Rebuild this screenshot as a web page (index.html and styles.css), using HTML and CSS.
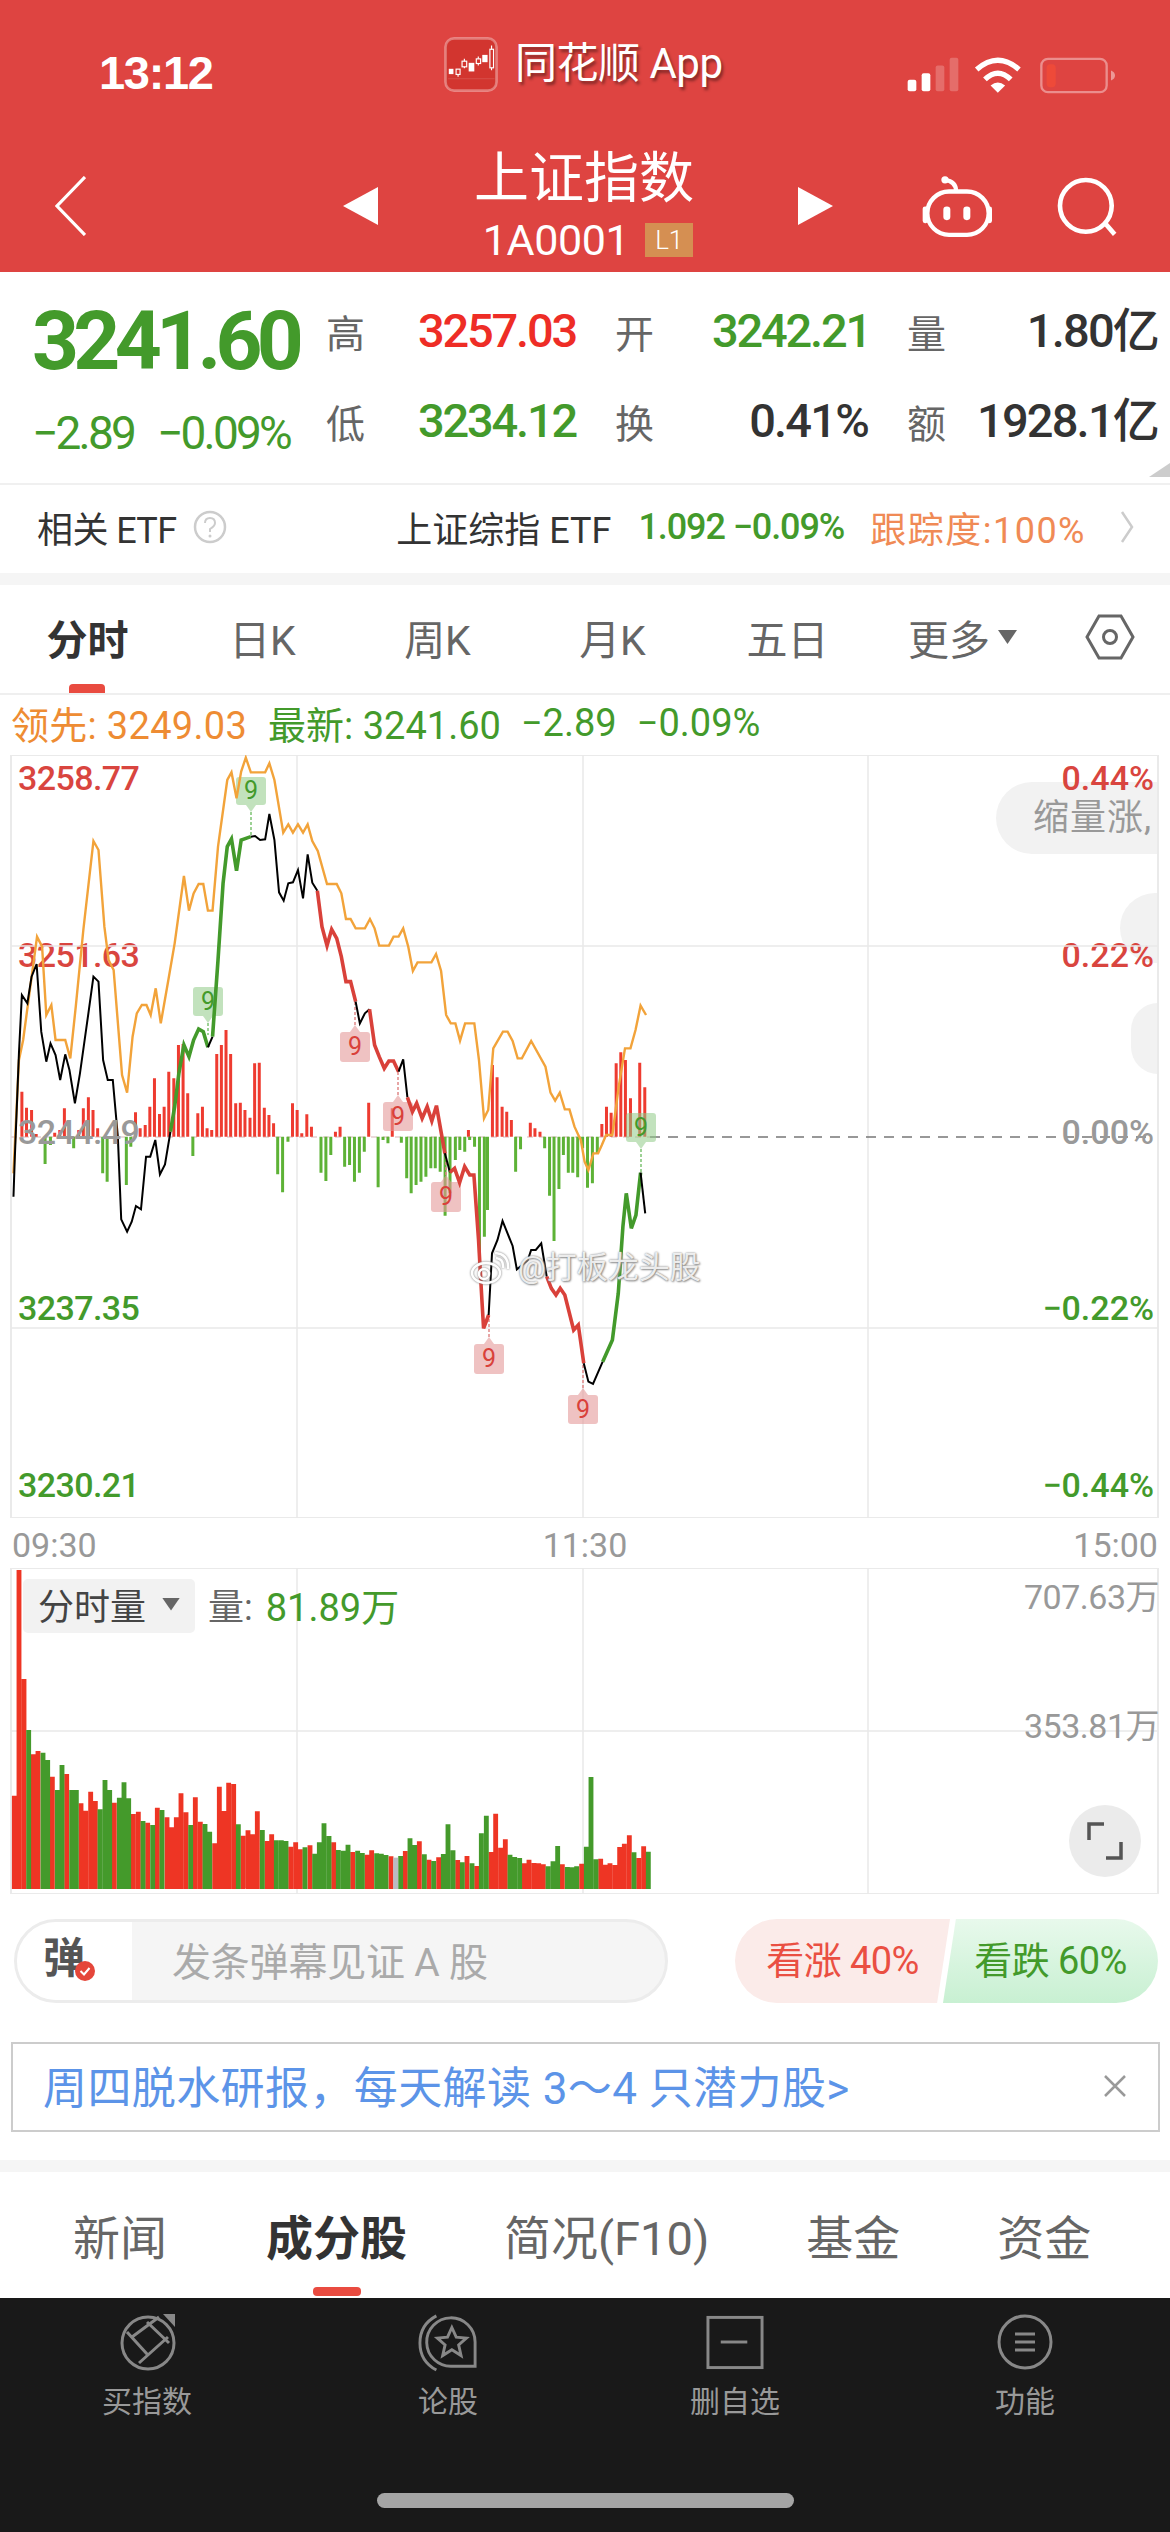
FILE: index.html
```html
<!DOCTYPE html>
<html lang="zh-CN">
<head>
<meta charset="utf-8">
<title>上证指数</title>
<link rel="stylesheet" href="styles.css">
</head>
<body>
<div class="page">
  <header class="header">
    <div class="status">
      <div class="time">13:12</div>
      <div class="app">
        <svg class="logo" viewBox="38 16 162 166">
          <rect x="42" y="20" width="154" height="158" rx="26" fill="#D2352F" stroke="#fff" stroke-opacity=".35" stroke-width="8"/>
          <path d="M50 142H190" stroke="#fff" stroke-opacity=".2" stroke-width="2"/>
          <g fill="#fff"><rect x="52" y="112" width="14" height="16"/><rect x="112" y="94" width="17" height="26"/><rect x="153" y="70" width="16" height="22"/></g>
          <g fill="none" stroke="#fff" stroke-width="3.5"><rect x="74" y="113" width="12" height="16"/><path d="M80 129V136"/><rect x="92" y="89" width="14" height="17"/><path d="M99 82V89M99 106V110"/><rect x="135" y="82" width="13" height="14"/><path d="M141 75V82M141 96V102"/><rect x="176" y="53" width="11" height="56"/><path d="M181 42V53M181 109V116"/></g>
        </svg>
        <span class="app-name">同花顺 App</span>
      </div>
      <div class="sys">
        <svg class="sig" viewBox="20 50 156 104"><g fill="#fff"><rect x="22" y="118" width="26" height="34" rx="6"/><rect x="64" y="98" width="26" height="54" rx="6"/><rect x="106" y="75" width="26" height="77" rx="6" opacity=".22"/><rect x="148" y="52" width="26" height="100" rx="6" opacity=".22"/></g></svg>
        <svg class="wifi" viewBox="220 40 155 118"><path d="M233 84Q297 28 361 84M258 114Q297 76 336 114" fill="none" stroke="#fff" stroke-width="16"/><path d="M275 132Q297 114 319 132L297 154Z" fill="#fff"/></svg>
        <svg class="batt" viewBox="420 47 228 110"><rect x="424" y="52" width="196" height="100" rx="20" fill="none" stroke="#fff" stroke-opacity=".4" stroke-width="7"/><rect x="440" y="68" width="27" height="69" rx="11" fill="#EE4A39"/><path d="M633 87Q645 92 645 102T633 117Z" fill="#fff" fill-opacity=".45"/></svg>
      </div>
    </div>
    <div class="nav">
      <svg class="back" viewBox="0 0 31 60"><path d="M30 1L2 30L30 59" fill="none" stroke="#fff" stroke-width="3.2"/></svg>
      <svg class="tri tri-l" viewBox="0 0 35 38"><path d="M35 0V38L0 19Z" fill="#fff"/></svg>
      <div class="title-block">
        <div class="title">上证指数</div>
        <div class="sub"><span class="code">1A0001</span><span class="level">L1</span></div>
      </div>
      <svg class="tri tri-r" viewBox="0 0 35 38"><path d="M0 0V38L35 19Z" fill="#fff"/></svg>
      <svg class="robot" viewBox="60 395 225 200"><g fill="none" stroke="#fff" stroke-width="13"><rect x="82" y="450" width="184" height="130" rx="65"/><path d="M135 415Q168 420 168 448"/></g><circle cx="135" cy="415" r="11" fill="#fff"/><g fill="#fff"><rect x="130" y="495" width="21" height="41" rx="10"/><rect x="190" y="495" width="21" height="41" rx="10"/><rect x="68" y="495" width="16" height="50" rx="7"/><rect x="262" y="495" width="14" height="50" rx="7"/></g></svg>
      <svg class="search" viewBox="460 400 190 190"><circle cx="553" cy="493" r="78" fill="none" stroke="#fff" stroke-width="14"/><path d="M613 548L640 579" stroke="#fff" stroke-width="14"/></svg>
    </div>
  </header>

  <section class="quote">
    <div class="now">
      <div class="price">3241.60</div>
      <div class="change"><span>−2.89</span><span>−0.09%</span></div>
    </div>
    <div class="stats">
      <div class="stat"><span class="k">高</span><span class="v up">3257.03</span></div>
      <div class="stat"><span class="k">开</span><span class="v down mid">3242.21</span></div>
      <div class="stat"><span class="k">量</span><span class="v">1.80亿</span></div>
      <div class="stat"><span class="k">低</span><span class="v down">3234.12</span></div>
      <div class="stat"><span class="k">换</span><span class="v">0.41%</span></div>
      <div class="stat"><span class="k">额</span><span class="v">1928.1亿</span></div>
    </div>
    <i class="corner"></i>
  </section>

  <section class="etf">
    <span class="etf-label">相关 ETF</span>
    <svg class="help" viewBox="0 0 34 34"><circle cx="17" cy="17" r="15" fill="none" stroke="#ccc" stroke-width="2.5"/><path d="M12 13Q12 8 17 8T22 13Q22 16 17 19V22" fill="none" stroke="#ccc" stroke-width="2"/><circle cx="17" cy="26" r="1.5" fill="#ccc"/></svg>
    <div class="etf-right">
      <span class="etf-name">上证综指 ETF</span>
      <span class="etf-val">1.092 −0.09%</span>
      <span class="etf-track">跟踪度:100%</span>
      <svg class="etf-arrow" viewBox="0 0 14 32"><path d="M2 1L12 16L2 31" fill="none" stroke="#ccc" stroke-width="2.5"/></svg>
    </div>
  </section>

  <div class="gap"></div>

  <nav class="tabs">
    <a class="tab active">分时</a>
    <a class="tab">日K</a>
    <a class="tab">周K</a>
    <a class="tab">月K</a>
    <a class="tab">五日</a>
    <a class="tab">更多<i class="caret"></i></a>
    <a class="tab"><svg class="hex" viewBox="0 0 50 46"><path d="M14 2H36L48 23L36 44H14L2 23Z" fill="none" stroke="#666" stroke-width="3"/><circle cx="25" cy="23" r="6.5" fill="none" stroke="#666" stroke-width="3"/></svg></a>
  </nav>

  <div class="legend">
    <span class="lead">领先: 3249.03</span>
    <span class="last">最新: 3241.60</span>
    <span class="last">−2.89</span>
    <span class="last">−0.09%</span>
  </div>

  <div class="chart">
    <div class="bubble b1">缩量涨,</div>
    <div class="bubble b2"></div>
    <div class="bubble b3"></div>
    <div class="axis axis-l">
      <span class="up2">3258.77</span><span class="up2">3251.63</span><span class="flat">3244.49</span><span class="down">3237.35</span><span class="down">3230.21</span>
    </div>
    <div class="axis axis-r">
      <span class="up2">0.44%</span><span class="up2">0.22%</span><span class="flat">0.00%</span><span class="down">−0.22%</span><span class="down">−0.44%</span>
    </div>
    <svg class="plot" viewBox="0 755 1170 763" width="1170" height="763">
      <g class="grid">
        <rect x="11" y="755" width="1147" height="763"/>
        <path d="M297 755V1518M583 755V1518M868 755V1518M11 946H1158M11 1328H1158"/>
      </g>
      <path class="zero-a" d="M11 1137H650"/>
      <path class="zero-b" d="M650 1137H1150"/>
      <g class="z3">
        <path class="bar-r" d="M52 1055V1190M63 1103V1190M75 1110V1190M86 1182V1190M130 1178V1190M142 1170V1190M153 1105V1190M187 1170V1190M198 1105V1190M210 1072V1190M221 1110V1190M232 1165V1190M322 1117V1190M333 1165V1190M345 1155V1190M356 1100V1190M367 1015V1190M379 1122V1190M390 1100V1190M401 995V1190M413 1015V1190M424 915V1190M435 912V1190M446 1060V1190M470 1120V1190M481 1100V1190M492 1165V1190M503 1170V1190M515 942V1190M526 915V1190M537 870V1190M548 942V1190M560 1090V1190M571 1088V1190M582 1110V1190M594 1133V1190M605 970V1190M616 968V1190M628 1103V1190M639 1125V1190M650 1150V1190M695 1090V1190M706 1110V1190M717 1180V1190M729 1123V1190M740 1160V1190M797 1175V1190M808 1160V1190M876 1088V1190M932 1105V1190M1113 1170V1190M1170 975V1190M1181 1012V1190M1193 1100V1190M1204 1115V1190M1215 1140V1190M1260 1148V1190M1271 1165V1190M1283 1175V1190M1430 1152V1190M1441 1100V1190M1452 1118V1190M1464 970V1190M1475 937V1190M1486 960V1190M1498 1075V1190M1520 968V1190M1532 1042V1190"/>
      </g>
      <g class="z4">
        <path class="bar-g" d="M101 72V-10M113 15V-10M165 25V-10M230 100V-10M240 125V-10M283 135V-10M293 20V-10M432 48V-10M622 103V-10M633 157V-10M645 5V-10M719 98V-10M730 123V-10M741 45V-10M772 80V-10M783 75V-10M794 125V-10M805 98V-10M816 35V-10M847 142V-10M858 0V-10M869 10V-10M899 8V-10M911 115V-10M921 160V-10M932 135V-10M943 125V-10M954 110V-10M965 85V-10M975 85V-10M986 95V-10M997 227V-10M1008 160V-10M1020 60V-10M1030 30V-10M1041 35V-10M1052 0V-10M1063 20V-10M1074 340V-10M1085 290V-10M1092 210V-10M1155 95V-10M1166 28V-10M1220 25V-10M1231 167V-10M1241 303V-10M1252 147V-10M1262 45V-10M1273 98V-10M1283 98V-10M1294 112V-10M1305 25V-10M1316 143V-10M1327 130V-10M1338 40V-10"/>
      </g>
      <g class="tags">
        <g class="tag-g"><rect x="236" y="777" width="30" height="28" rx="3"/><path d="M246 805H256L251 812Z"/><path class="dash" d="M251 812V835"/><text x="251" y="799">9</text></g>
        <g class="tag-g"><rect x="193" y="987" width="30" height="29" rx="3"/><path d="M203 1016H213L208 1023Z"/><path class="dash" d="M208 1023V1035"/><text x="208" y="1010">9</text></g>
        <g class="tag-r"><rect x="340" y="1032" width="30" height="30" rx="3"/><path d="M350 1032H360L355 1025Z"/><path class="dash" d="M355 1025V1002"/><text x="355" y="1055">9</text></g>
        <g class="tag-r"><rect x="383" y="1102" width="30" height="29" rx="3"/><path d="M393 1102H403L398 1095Z"/><path class="dash" d="M398 1095V1072"/><text x="398" y="1125">9</text></g>
        <g class="tag-r"><rect x="431" y="1182" width="30" height="30" rx="3"/><path d="M441 1182H451L446 1175Z"/><path class="dash" d="M446 1175V1150"/><text x="446" y="1205">9</text></g>
        <g class="tag-r"><rect x="474" y="1344" width="30" height="30" rx="3"/><path d="M484 1344H494L489 1337Z"/><path class="dash" d="M489 1337V1315"/><text x="489" y="1367">9</text></g>
        <g class="tag-r"><rect x="568" y="1395" width="30" height="29" rx="3"/><path d="M578 1395H588L583 1388Z"/><path class="dash" d="M583 1388V1363"/><text x="583" y="1418">9</text></g>
        <g class="tag-g"><rect x="626" y="1113" width="30" height="29" rx="3"/><path d="M636 1142H646L641 1149Z"/><path class="dash" d="M641 1149V1172"/><text x="641" y="1136">9</text></g>
      </g>
      <g class="z3 lines">
        <path class="avg" d="M32 1300L45 960L55 900L88 590L100 620L110 825L122 795L132 900L155 900L167 955L180 800L198 570L222 303L234 330L248 560L258 660L270 690L290 1005L302 1058L315 890L325 820L337 795L348 795L358 825L370 745L382 850L400 720L415 610L437 408L449 512L460 460L472 432L483 432L494 512L505 512L518 320L540 120L550 97L562 175L573 95L584 53L596 97L630 97L640 70L652 120L673 278L685 253L696 278L708 253L720 278L731 253L742 303L755 333L777 432L800 432L811 460L822 537L833 537L845 565L867 565L879 537L890 565L901 617L924 617L935 590L947 590L958 565L970 620L981 693L992 667L1025 667L1036 642L1048 693L1060 825L1071 850L1082 850L1093 902L1105 850L1127 850L1138 960L1150 1135L1160 1110L1172 925L1195 875L1206 875L1218 903L1230 955L1240 955L1262 903L1296 980L1308 1058L1319 1082L1330 1058L1342 1108L1353 1108L1365 1160L1376 1190L1380 1200L1389 1265L1398 1290L1410 1240L1421 1240L1430 1215L1440 1185L1455 1185L1470 1040L1485 925L1498 925L1510 870L1522 797L1535 825"/>
        <path class="px" d="M32 1370L35 1260L45 940L52 765L65 790L75 710L87 672L98 875L110 965L120 910L132 945L143 1020L155 943L165 990L178 1090L190 1000L210 820L222 710L234 725L245 960L256 1020L268 1020L280 1190L288 1438L302 1475L313 1445L323 1398L335 1408L347 1250L357 1250L369 1200L380 1303L392 1273L405 1175"/>
        <path class="pg" d="M405 1175L415 1100L425 1000L437 915L449 950L460 900L472 867L483 875L494 922"/>
        <path class="px" d="M494 922L505 890"/>
        <path class="pg" d="M505 890L518 660L530 430L540 320L550 297L562 392L573 300L596 290"/>
        <path class="px" d="M596 290L606 288L618 300L630 298L640 222L652 300L663 457L674 482L685 430L696 427L708 390L720 475L731 343L742 428L754 452"/>
        <path class="pr" d="M754 452L765 560L777 617L788 568L800 595L811 650L822 725L833 725L845 785"/>
        <path class="px" d="M845 785L855 850L867 820L878 808"/>
        <path class="pr" d="M878 808L890 915L901 950L913 985L924 963L935 963L947 995"/>
        <path class="px" d="M947 995L958 958L968 1072"/>
        <path class="pr" d="M968 1072L980 1115L990 1090L1003 1135L1015 1100L1026 1143L1037 1097L1057 1240"/>
        <path class="px" d="M1057 1240L1069 1297"/>
        <path class="pr" d="M1069 1297L1080 1285L1092 1328L1104 1280L1116 1305L1126 1305L1137 1500L1145 1680L1149 1765L1161 1725"/>
        <path class="px" d="M1161 1725L1169 1540L1182 1500L1194 1443L1218 1518L1228 1588L1241 1575L1254 1560L1262 1530L1273 1530L1286 1510L1299 1610"/>
        <path class="pr" d="M1299 1610L1310 1645L1321 1665L1331 1645L1342 1665L1363 1770L1374 1755L1387 1870"/>
        <path class="px" d="M1387 1870L1398 1925L1409 1932L1432 1865"/>
        <path class="pg" d="M1432 1865L1455 1800L1469 1660L1480 1460L1488 1360L1500 1465L1511 1425L1522 1298"/>
        <path class="px" d="M1522 1298L1533 1420"/>
      </g>
    </svg>
    <div class="mark">
      <svg class="weibo" viewBox="0 0 40 34"><g fill="none" stroke="#fff" stroke-width="2.5"><ellipse cx="16" cy="22" rx="14" ry="10"/><circle cx="14" cy="23" r="5"/><path d="M26 7Q34 8 33 17M25 2Q39 3 38 18"/></g></svg>
      <span>@打板龙头股</span>
    </div>
  </div>

  <div class="times"><span>09:30</span><span>11:30</span><span>15:00</span></div>

  <div class="volume">
    <svg class="vol-plot" viewBox="0 1568 1170 326" width="1170" height="326">
      <g class="grid">
        <rect x="11" y="1568" width="1147" height="326"/>
        <path d="M297 1568V1894M583 1568V1894M868 1568V1894M11 1731H1158"/>
      </g>
      <g class="vol-bars">
        <path class="vr" d="M19 437V717M33 -240V717M48 87V717M76 313V717M90 303V717M133 380V717M176 372V717M219 460V717M233 482V717M248 425V717M262 453V717M319 458V717M376 492V717M391 485V717M419 518V717M448 473V717M477 502V717M491 532V717M505 502V717M519 430V717M534 487V717M562 442V717M577 515V717M620 580V717M634 410V717M648 483V717M662 398V717M677 402V717M705 557V717M720 541V717M734 553V717M748 484V717M777 573V717M791 553V717M848 590V717M863 577V717M877 598V717M906 586V717M977 577V717M1034 606V717M1077 614V717M1091 601V717M1149 619V717M1192 603V717M1234 574V717M1263 629V717M1292 622V717M1349 630V717M1377 618V717M1406 648V717M1449 606V717M1463 491V717M1478 593V717M1492 568V717M1549 640V717M1563 629V717M1578 639V717M1592 640V717M1606 643V717M1663 643V717M1721 641V717M1778 626V717M1792 644V717M1806 640V717M1821 645V717M1835 591V717M1849 581V717M1864 556V717M1892 624V717M1907 589V717"/>
        <path class="vg" d="M62 240V717M105 308V717M119 330V717M148 420V717M162 345V717M191 420V717M205 420V717M276 478V717M291 390V717M305 420V717M334 443V717M348 397V717M362 445V717M405 513V717M434 525V717M462 480V717M548 525V717M591 522V717M605 545V717M691 523V717M763 540V717M805 571V717M820 571V717M834 573V717M891 592V717M920 611V717M934 577V717M948 520V717M963 558V717M991 600V717M1006 602V717M1020 584V717M1049 602V717M1063 609V717M1106 610V717M1120 611V717M1134 615V717M1178 618V717M1206 565V717M1220 585V717M1249 613V717M1277 633V717M1306 612V717M1320 523V717M1335 601V717M1363 637V717M1392 640V717M1420 550V717M1435 497V717M1506 614V717M1520 621V717M1535 624V717M1620 649V717M1635 634V717M1649 588V717M1678 651V717M1692 652V717M1706 649V717M1735 590V717M1749 381V717M1764 628V717M1878 607V717M1921 605V717"/>
        <path class="vn" d="M1163 623V717"/>
      </g>
    </svg>
    <div class="vol-head">
      <button class="vol-select">分时量<i class="caret"></i></button>
      <span class="vol-key">量:</span>
      <span class="vol-val">81.89万</span>
    </div>
    <div class="vol-axis"><span>707.63万</span><span>353.81万</span></div>
    <div class="expand"><svg viewBox="0 0 36 38"><path d="M2 18V2H17M34 20V36H19" fill="none" stroke="#555" stroke-width="3.5"/></svg></div>
  </div>

  <div class="actions">
    <div class="danmu">
      <div class="danmu-badge"><span class="dan">弹</span><svg class="check" viewBox="0 0 20 20"><circle cx="10" cy="10" r="10" fill="#E5463A"/><path d="M5.5 10L9 13.5L14.5 7" fill="none" stroke="#fff" stroke-width="2"/></svg></div>
      <span class="danmu-text">发条弹幕见证 A 股</span>
    </div>
    <div class="votes">
      <div class="vote vote-up">看涨 40%</div>
      <div class="vote vote-down">看跌 60%</div>
    </div>
  </div>

  <div class="banner">
    <span>周四脱水研报，每天解读 3～4 只潜力股&gt;</span>
    <svg class="close" viewBox="0 0 24 24"><path d="M2 2L22 22M22 2L2 22" stroke="#999" stroke-width="2.5"/></svg>
  </div>

  <div class="gap gap2"></div>

  <nav class="subtabs">
    <a>新闻</a><a class="active">成分股</a><a>简况(F10)</a><a>基金</a><a>资金</a>
  </nav>

  <footer class="toolbar">
    <div class="tools">
      <a class="tool">
        <svg viewBox="115 2312 60 60"><g fill="none" stroke="#888" stroke-width="3"><circle cx="146" cy="2343" r="26"/><path d="M125 2332L145 2354M137 2363L166 2337M145 2322L167 2343M130 2337L157 2317"/></g><path d="M161 2314H173V2327Z" fill="#888"/></svg>
        <span>买指数</span>
      </a>
      <a class="tool">
        <svg viewBox="415 2312 62 60"><g fill="none" stroke="#888" stroke-width="3"><path d="M474 2367H450A25 25 0 1 1 474 2342Z"/><path d="M434 2315Q417 2324 417 2343T434 2371"/><path d="M450 2327L454.500 2337L465 2338L457 2345L459.500 2356L450 2350L440.500 2356L443 2345L435 2338L445.500 2337Z"/></g></svg>
        <span>论股</span>
      </a>
      <a class="tool">
        <svg viewBox="707 2313 61 60"><rect x="710" y="2318" width="55" height="51" fill="none" stroke="#888" stroke-width="3"/><path d="M723 2343H750" stroke="#888" stroke-width="3"/></svg>
        <span>删自选</span>
      </a>
      <a class="tool tool-end">
        <svg viewBox="995 2313 60 60"><circle cx="1025" cy="2343" r="26" fill="none" stroke="#888" stroke-width="3"/><path d="M1015 2335H1035M1015 2343H1035M1015 2351H1035" stroke="#888" stroke-width="3"/></svg>
        <span>功能</span>
      </a>
    </div>
    <div class="home"></div>
  </footer>
</div>
</body>
</html>
```

FILE: styles.css
```css
* { box-sizing: border-box; }
html, body { margin: 0; padding: 0; background: #fff; }
body { font-family: Roboto, "Noto Sans CJK SC", sans-serif; color: #333; }
.page { width: 1170px; height: 2532px; overflow: hidden; display: flex; flex-direction: column; }
i { font-style: normal; }
svg { display: block; }

/* header */
.header { height: 272px; background: #DE4441; color: #fff; flex: none; }
.status { height: 130px; display: grid; grid-template-columns: 444px 1fr auto; }
.time { padding: 44px 0 0 99px; font: 600 47px/58px "Liberation Sans", sans-serif; letter-spacing: -1.3px; }
.app { display: flex; align-items: flex-start; padding-top: 37px; }
.logo { width: 54px; height: 55px; }
.app-name { margin: -3px 0 0 17px; font-size: 42px; line-height: 60px; text-shadow: 2px 3px 3px rgba(0,0,0,.4); letter-spacing: -.5px; }
.sys { display: flex; align-items: flex-start; padding: 57px 54px 0 0; }
.sig { width: 52px; height: 35px; }
.wifi { width: 52px; height: 39px; margin: -2px 0 0 13px; }
.batt { width: 76px; height: 37px; margin-left: 16px; }

.nav { height: 142px; display: flex; align-items: center; padding-top: 10px; }
.back { width: 31px; height: 60px; margin-left: 55px; }
.tri { width: 35px; height: 38px; }
.tri-l { margin-left: 257px; }
.title-block { width: 420px; display: flex; flex-direction: column; align-items: center; margin-top: -6px; }
.title { font-size: 55px; line-height: 60px; padding-right: 8px; }
.sub { display: flex; align-items: center; margin-top: 14px; height: 36px; }
.code { font-size: 43px; letter-spacing: -.4px; font-weight: 400; }
.level { background: #D58F52; width: 48px; height: 34px; margin-left: 16px; font-size: 26px; line-height: 34px; text-align: center; font-weight: 300; }
.robot { width: 75px; height: 67px; margin-left: 87px; }
.search { width: 63px; height: 63px; margin-left: 60px; }

/* quote */
.quote { height: 211px; flex: none; display: flex; position: relative; }
.now { width: 326px; padding: 22px 0 0 32px; }
.price { font-size: 82px; line-height: 94px; font-weight: 700; color: #439A2B; letter-spacing: -5.7px; }
.change { display: flex; gap: 23px; margin-top: 21px; font-size: 46px; line-height: 48px; color: #439A2B; letter-spacing: -2.8px; font-weight: 400; }
.stats { display: grid; grid-template-columns: 250px 253px 251px; column-gap: 39px; grid-auto-rows: 90px; padding-top: 37px; height: 100%; }
.stat { display: flex; justify-content: space-between; align-items: flex-start; }
.k { font-size: 39px; line-height: 52px; color: #666; }
.v { font-size: 47px; line-height: 52px; font-weight: 500; letter-spacing: -1.8px; color: #333; margin-top: -4px; }
.v.up, .v.down { letter-spacing: -2.2px; }
.v.mid { margin-right: -2px; }
.v.up { color: #EE2D26; }
.v.down { color: #439A2B; }
.corner { position: absolute; right: 0; top: 191px; width: 21px; height: 14px; background: #ccc; clip-path: polygon(100% 0, 100% 100%, 0 100%); }

/* etf */
.etf { height: 90px; flex: none; border-top: 2px solid #f0f0f0; display: flex; align-items: center; padding: 0 0 5px 37px; }
.etf-label { font-size: 36px; color: #333; letter-spacing: -.6px; }
.help { width: 34px; height: 34px; margin-left: 16px; }
.etf-right { margin-left: auto; display: flex; align-items: center; padding-right: 36px; font-size: 36px; }
.etf-name { color: #333; letter-spacing: 0; }
.etf-val { color: #439A2B; margin-left: 27px; font-weight: 500; letter-spacing: -1.1px; }
.etf-track { color: #F08A55; margin-left: 26px; letter-spacing: 1.5px; }
.etf-arrow { width: 14px; height: 32px; margin-left: 34px; }

.gap { height: 12px; background: #f5f5f5; flex: none; }

/* tabs */
.tabs { height: 110px; flex: none; border-bottom: 2px solid #efefef; display: grid; grid-template-columns: repeat(6, 175px) 120px; align-items: center; }
.tab { font-size: 41px; color: #666; display: flex; justify-content: center; align-items: center; height: 100%; position: relative; padding-bottom: 4px; }
.tab.active { color: #333; font-weight: 700; }
.tab.active::after { content: ""; position: absolute; left: 69px; bottom: 0; width: 36px; height: 9px; border-radius: 4px 4px 0 0; background: #E94B40; }
.caret { display: inline-block; width: 19px; height: 14px; background: #666; clip-path: polygon(0 0, 100% 0, 50% 100%); margin-left: 8px; }
.hex { width: 50px; height: 46px; }

/* legend */
.legend { height: 60px; flex: none; display: flex; align-items: center; padding: 0 0 5px 11px; font-size: 38px; gap: 20px; }
.lead { color: #EE8C33; letter-spacing: .3px; margin-right: 1px; }
.last { color: #439A2B; }

/* chart */
.chart { position: relative; width: 1170px; height: 763px; flex: none; }
.plot, .vol-plot { position: relative; z-index: 1; }
.grid rect { fill: none; stroke: #eaeaea; stroke-width: 2; }
.grid path { fill: none; stroke: #e9e9e9; stroke-width: 1.5; }
.zero-a { stroke: #eadada; stroke-width: 2; stroke-dasharray: 6 6; }
.zero-b { stroke: #777; stroke-width: 1.5; stroke-dasharray: 10 8; }
.z3 { transform: translate(0, 740px) scale(.42088, .33333); }
.z4 { transform: translate(0, 1140px) scale(.44643, .33333); }
.z3 path, .z4 path { vector-effect: non-scaling-stroke; fill: none; }
.bar-r { stroke: #EE3B30; stroke-width: 3; }
.bar-g { stroke: #5DB236; stroke-width: 3; }
.avg { stroke: #F2A33A; stroke-width: 2.4; }
.px { stroke: #000; stroke-width: 2; }
.pg { stroke: #439A2B; stroke-width: 3.6; }
.pr { stroke: #D9413A; stroke-width: 3.6; }
.tags text { font: 400 25px Roboto, sans-serif; text-anchor: middle; }
.tag-g rect, .tag-g path { fill: #8FCB87; fill-opacity: .55; }
.tag-r rect, .tag-r path { fill: #E59A9A; fill-opacity: .6; }
.tag-g text { fill: #439A2B; }
.tag-r text { fill: #D9413A; }
.tags .dash { fill: none; stroke-width: 1.5; stroke-dasharray: 3 2; }
.tag-g .dash { stroke: #7CC272; }
.tag-r .dash { stroke: #E08888; }

.axis { position: absolute; top: 6px; height: 741px; display: flex; flex-direction: column; justify-content: space-between; font-size: 34px; line-height: 34px; font-weight: 500; }
.axis-l { left: 18px; letter-spacing: -.6px; }
.axis-r { right: 16px; text-align: right; }
.up2 { color: #D9453F; }
.flat { color: #999; position: relative; z-index: 2; }
.axis .down { color: #439A2B; }
.bubble { position: absolute; right: 12px; background: #f2f2f2; border-radius: 36px 0 0 36px; }
.b1 { top: 27px; width: 162px; height: 72px; padding-left: 37px; font-size: 36px; line-height: 72px; color: #999; white-space: nowrap; letter-spacing: 1px; }
.b2 { top: 138px; width: 38px; height: 70px; }
.b3 { top: 248px; width: 27px; height: 71px; }
.mark { position: absolute; left: 470px; top: 495px; display: flex; align-items: center; gap: 8px; z-index: 2; font-size: 31px; line-height: 36px; color: rgba(255,255,255,.85); text-shadow: 0 0 2px #777, 1px 1px 2px #999; }
.weibo { width: 40px; height: 34px; filter: drop-shadow(0 0 1px #777); }

/* time row */
.times { height: 50px; flex: none; display: flex; justify-content: space-between; align-items: center; padding: 3px 12px 0; font-size: 34px; color: #999; }

/* volume */
.volume { position: relative; width: 1170px; height: 326px; flex: none; }
.vol-bars { transform: translate(8px, 1650px) scale(.33333); }
.vol-bars path { fill: none; stroke-width: 14.6; }
.vr { stroke: #EE3524; }
.vg { stroke: #449A2B; }
.vn { stroke: #BBBBC4; }
.vol-head { position: absolute; left: 23px; top: 11px; z-index: 2; display: flex; align-items: center; height: 54px; }
.vol-select { width: 172px; height: 54px; border: 0; padding: 0 0 4px 15px; border-radius: 5px; background: #f2f2f2; display: flex; align-items: center; font: 400 36px Roboto, "Noto Sans CJK SC", sans-serif; color: #444; }
.vol-select .caret { margin-left: 16px; width: 18px; height: 13px; }
.vol-key { margin: -4px 0 0 13px; font-size: 36px; color: #666; }
.vol-val { margin: -4px 0 0 13px; font-size: 38px; color: #439A2B; }
.vol-axis { position: absolute; right: 11px; top: 7px; z-index: 2; text-align: right; font-size: 34px; line-height: 44px; color: #999; font-weight: 400; display: flex; flex-direction: column; gap: 85px; letter-spacing: -.5px; }
.expand { position: absolute; left: 1069px; top: 237px; width: 72px; height: 72px; border-radius: 50%; background: #ebebeb; z-index: 2; display: flex; align-items: center; justify-content: center; }
.expand svg { width: 36px; height: 38px; }

/* actions */
.actions { flex: none; display: flex; padding: 25px 12px 0 14px; justify-content: space-between; }
.danmu { width: 654px; height: 84px; border: 3px solid #ececec; border-radius: 42px; background: #f5f5f5; display: flex; align-items: center; overflow: hidden; }
.danmu-badge { width: 115px; height: 100%; background: #fff; position: relative; padding: 13px 0 0 26px; flex: none; }
.dan { font-size: 42px; line-height: 48px; font-weight: 700; color: #555; }
.check { position: absolute; left: 58px; top: 39px; width: 20px; height: 20px; }
.danmu-text { margin: -4px 0 0 40px; font-size: 39px; color: #aaa; letter-spacing: -.2px; }
.votes { display: flex; }
.vote { width: 215px; height: 84px; font-size: 38px; line-height: 84px; text-align: center; letter-spacing: -.6px; }
.vote-up { background: #FBEBE9; color: #EA4F42; border-radius: 42px 0 0 42px; clip-path: polygon(0 0, 100% 0, 94% 100%, 0 100%); }
.vote-down { background: linear-gradient(#E8F9EC, #C8F0D2); color: #439A2B; border-radius: 0 42px 42px 0; margin-left: -7px; clip-path: polygon(6% 0, 100% 0, 100% 100%, 0 100%); }

.banner { flex: none; margin: 39px 0 0 11px; width: 1149px; height: 90px; border: 2px solid #ccc; display: flex; align-items: center; justify-content: space-between; padding: 0 31px 4px 30px; font-size: 44px; color: #5C94E8; letter-spacing: .4px; }
.close { width: 24px; height: 24px; margin-top: 2px; }
.gap2 { margin-top: 28px; }

.subtabs { height: 126px; flex: none; display: flex; align-items: center; gap: 97px; padding: 0 0 0 73px; font-size: 47px; color: #666; }
.subtabs a { position: relative; line-height: 60px; margin-top: 8px; }
.subtabs a:first-child { margin-right: 2px; }
.subtabs .active { color: #333; font-weight: 700; }
.subtabs .active::after { content: ""; position: absolute; left: 47px; top: 78px; width: 48px; height: 9px; border-radius: 4px; background: #E94B40; }

/* toolbar */
.toolbar { flex: 1; background: #191919; position: relative; }
.tools { display: grid; grid-template-columns: 294px 308px 266px 302px; padding-top: 14px; }
.tool { display: flex; flex-direction: column; align-items: center; color: #999; font-size: 30px; line-height: 40px; }
.tool svg { width: 60px; height: 60px; margin-bottom: 10px; }
.tool-end { padding-left: 12px; }
.home { position: absolute; left: 377px; top: 195px; width: 417px; height: 15px; border-radius: 8px; background: #a5a5a5; }
```
